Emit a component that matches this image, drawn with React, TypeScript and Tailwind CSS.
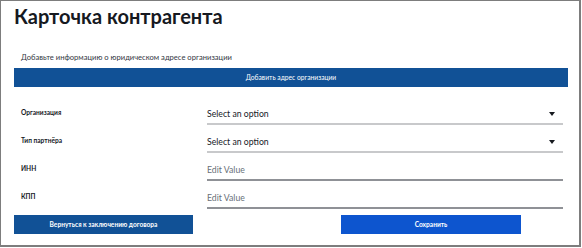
const rows = [
  { label: "Организация", kind: "select", placeholder: "Select an option" },
  { label: "Тип партнёра", kind: "select", placeholder: "Select an option" },
  { label: "ИНН", kind: "input", placeholder: "Edit Value" },
  { label: "КПП", kind: "input", placeholder: "Edit Value" },
];

function Caret() {
  return (
    <svg width="6" height="4" viewBox="0 0 6 4" className="shrink-0">
      <path d="M0 0h6L3 4z" fill="#16191f" />
    </svg>
  );
}

export default function App() {
  return (
    <div className="w-[582px] h-[248px] bg-white font-['Lato',sans-serif]">
      <div className="w-[581px] h-[247px] border border-[#7d7d7d] border-r-2 border-b-2 px-[13px] pt-[1px]">
        <h1 className="text-[20px] leading-[28px] font-bold text-[#16191f]">Карточка контрагента</h1>
        <p className="mt-[21px] pl-[7px] text-[7.6px] leading-[12px] text-[#33383f]">
          Добавьте информацию о юридическом адресе организации
        </p>
        <div className="mt-[5px] w-[554px] h-[19px] bg-[#115196] flex items-center justify-center text-[6.7px] text-white">
          Добавить адрес организации
        </div>
        <div className="mt-[15px] flex flex-col">
          {rows.map((r) => (
            <div key={r.label} className="flex h-[28px]">
              <div className="w-[193px] pl-[7px] pt-[4px] text-[6.6px] leading-[12px] font-bold text-[#16191f]">
                {r.label}
              </div>
              <div
                className={
                  "w-[356px] h-[21px] mt-[2px] flex items-center justify-between pr-[8px] border-b-2 " +
                  (r.kind === "select" ? "border-[#c8c9cb]" : "border-[#8f9196]")
                }
              >
                <span
                  className={
                    "text-[8.7px] " + (r.kind === "select" ? "text-[#16191f]" : "text-[#687078]")
                  }
                >
                  {r.placeholder}
                </span>
                {r.kind === "select" && <Caret />}
              </div>
            </div>
          ))}
        </div>
        <div className="mt-[1px] flex">
          <button className="w-[179px] h-[19px] bg-[#115196] text-white text-[6.6px] font-bold">
            Вернуться к заключению договора
          </button>
          <button className="ml-[148px] w-[180px] h-[19px] bg-[#0d55cf] text-white text-[6.6px] font-bold">
            Сохранить
          </button>
        </div>
      </div>
    </div>
  );
}
